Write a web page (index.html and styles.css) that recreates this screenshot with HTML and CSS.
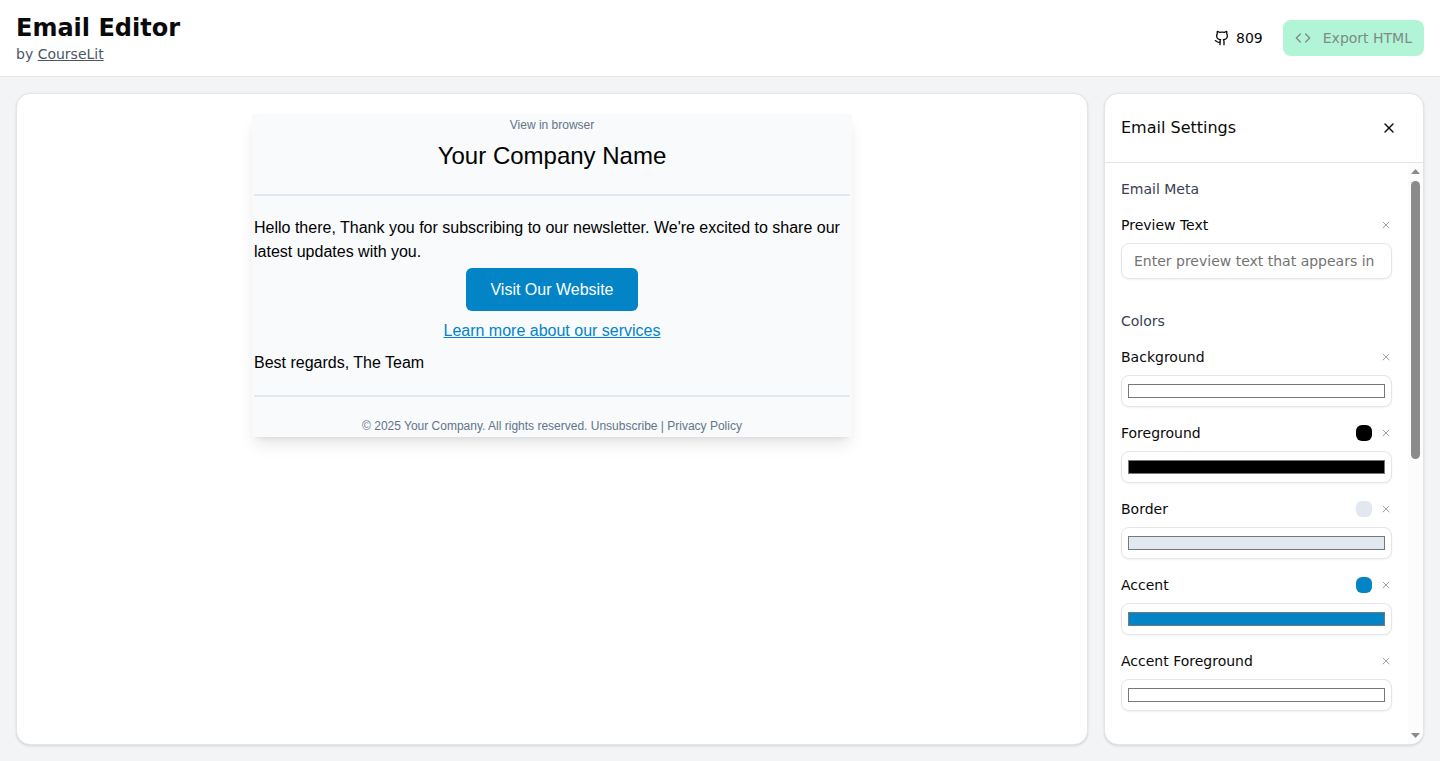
FILE: index.html
```html
<!DOCTYPE html>
<html lang="en">
<head>
    <meta charset="UTF-8">
    <meta name="viewport" content="width=device-width, initial-scale=1.0">
    <title>Email Editor</title>
    <link rel="stylesheet" href="styles.css">
</head>
<body>
    <svg class="sprite" aria-hidden="true">
        <symbol id="icon-x" viewBox="0 0 24 24">
            <path d="M18 6 6 18"/>
            <path d="m6 6 12 12"/>
        </symbol>
    </svg>

    <header class="topbar">
        <div>
            <h1>Email Editor</h1>
            <p class="byline">by <a href="#">CourseLit</a></p>
        </div>
        <div class="actions">
            <a class="stars" href="#">
                <svg class="icon" viewBox="0 0 24 24">
                    <path d="M15 22v-4a4.800 4.800 0 0 0-1-3.500c3 0 6-2 6-5.500.08-1.250-.27-2.480-1-3.500.28-1.150.28-2.350 0-3.500 0 0-1 0-3 1.500-2.640-.5-5.360-.5-8 0C6 2 5 2 5 2c-.3 1.150-.3 2.350 0 3.500A5.403 5.403 0 0 0 4 9c0 3.500 3 5.500 6 5.500-.39.490-.68 1.050-.85 1.650-.17.600-.22 1.230-.15 1.850v4"/>
                    <path d="M9 18c-4.510 2-5-2-7-2"/>
                </svg>
                809
            </a>
            <button class="export" type="button" disabled>
                <svg class="icon" viewBox="0 0 24 24">
                    <path d="m16 18 6-6-6-6"/>
                    <path d="m8 6-6 6 6 6"/>
                </svg>
                Export HTML
            </button>
        </div>
    </header>

    <main class="workspace">
        <section class="card canvas">
            <div class="email">
                <p class="block small">View in browser</p>
                <h2 class="block">Your Company Name</h2>
                <hr>
                <p class="block">Hello there, Thank you for subscribing to our newsletter. We're excited to share our latest updates with you.</p>
                <div class="block center"><a class="cta" href="#">Visit Our Website</a></div>
                <div class="block center"><a class="more" href="#">Learn more about our services</a></div>
                <p class="block">Best regards, The Team</p>
                <hr>
                <p class="block small">© 2025 Your Company. All rights reserved. Unsubscribe | Privacy Policy</p>
            </div>
        </section>

        <aside class="card panel">
            <div class="panel-header">
                <h2>Email Settings</h2>
                <button class="close" type="button" aria-label="Close"><svg class="icon"><use href="#icon-x"/></svg></button>
            </div>
            <div class="panel-main">
                <div class="panel-body">
                    <section class="group">
                        <h3>Email Meta</h3>
                        <div class="field">
                            <div class="field-head">
                                <label for="preview">Preview Text</label>
                                <button class="reset" type="button" aria-label="Reset"><svg class="icon"><use href="#icon-x"/></svg></button>
                            </div>
                            <input class="text-input" id="preview" type="text" placeholder="Enter preview text that appears in">
                        </div>
                    </section>
                    <section class="group">
                        <h3>Colors</h3>
                        <div class="field">
                            <div class="field-head">
                                <label for="background">Background</label>
                                <button class="reset" type="button" aria-label="Reset"><svg class="icon"><use href="#icon-x"/></svg></button>
                            </div>
                            <input class="color-input" id="background" type="color" value="#ffffff">
                        </div>
                        <div class="field">
                            <div class="field-head">
                                <label for="foreground">Foreground</label>
                                <span class="swatch swatch-foreground"></span>
                                <button class="reset" type="button" aria-label="Reset"><svg class="icon"><use href="#icon-x"/></svg></button>
                            </div>
                            <input class="color-input" id="foreground" type="color" value="#000000">
                        </div>
                        <div class="field">
                            <div class="field-head">
                                <label for="border">Border</label>
                                <span class="swatch swatch-border"></span>
                                <button class="reset" type="button" aria-label="Reset"><svg class="icon"><use href="#icon-x"/></svg></button>
                            </div>
                            <input class="color-input" id="border" type="color" value="#e2e8f0">
                        </div>
                        <div class="field">
                            <div class="field-head">
                                <label for="accent">Accent</label>
                                <span class="swatch swatch-accent"></span>
                                <button class="reset" type="button" aria-label="Reset"><svg class="icon"><use href="#icon-x"/></svg></button>
                            </div>
                            <input class="color-input" id="accent" type="color" value="#0284c7">
                        </div>
                        <div class="field">
                            <div class="field-head">
                                <label for="accent-foreground">Accent Foreground</label>
                                <button class="reset" type="button" aria-label="Reset"><svg class="icon"><use href="#icon-x"/></svg></button>
                            </div>
                            <input class="color-input" id="accent-foreground" type="color" value="#ffffff">
                        </div>
                    </section>
                </div>
                <div class="scrollbar" aria-hidden="true">
                    <svg class="arrow" viewBox="0 0 9 5"><path d="M0 5 4.500 0 9 5z"/></svg>
                    <div class="track"><div class="thumb"></div></div>
                    <svg class="arrow" viewBox="0 0 9 5"><path d="M0 0 4.500 5 9 0z"/></svg>
                </div>
            </div>
        </aside>
    </main>
</body>
</html>
```

FILE: styles.css
```css
* {
    box-sizing: border-box;
}
body {
    display: flex;
    flex-direction: column;
    height: 100vh;
    margin: 0;
    background-color: #f3f4f6;
    color: #0a0a0a;
    font-family: "DejaVu Sans", sans-serif;
    font-size: 14px;
    line-height: 20px;
}
h1, h2, h3, p {
    margin: 0;
    font-weight: normal;
}
button, input {
    font: inherit;
    color: inherit;
}
button {
    padding: 0;
    border: 0;
    background: none;
}
.sprite {
    display: none;
}
.icon {
    width: 16px;
    height: 16px;
    fill: none;
    stroke: currentColor;
    stroke-width: 2;
    stroke-linecap: round;
    stroke-linejoin: round;
}

/* top bar */
.topbar {
    display: flex;
    align-items: center;
    justify-content: space-between;
    padding: 12px 16px;
    background-color: #fff;
    border-bottom: 1px solid #e5e5e5;
}
.topbar h1 {
    font-size: 24px;
    line-height: 32px;
    font-weight: bold;
}
.byline {
    color: #4b5563;
}
.byline a {
    color: inherit;
}
.actions {
    display: flex;
    align-items: center;
    gap: 20px;
}
.stars {
    display: flex;
    align-items: center;
    gap: 6px;
    color: inherit;
    text-decoration: none;
}
.export {
    display: flex;
    align-items: center;
    gap: 12px;
    height: 36px;
    padding: 0 12px;
    border-radius: 8px;
    background-color: #b1f5d6;
    color: #7f8a85;
}

/* workspace */
.workspace {
    display: flex;
    flex: 1;
    gap: 16px;
    min-height: 0;
    padding: 16px;
}
.card {
    background-color: #fff;
    border: 1px solid #e5e5e5;
    border-radius: 14px;
    box-shadow: 0 1px 3px rgba(0, 0, 0, 0.1), 0 1px 2px -1px rgba(0, 0, 0, 0.1);
    overflow: hidden;
}
.canvas {
    flex: 1;
    padding: 20px;
}

/* email preview */
.email {
    max-width: 600px;
    margin: 0 auto;
    background-color: #f8fafc;
    box-shadow: 0 10px 15px -3px rgba(0, 0, 0, 0.1), 0 4px 6px -4px rgba(0, 0, 0, 0.1);
    color: #000;
    font-family: "Liberation Sans", Arial, sans-serif;
    font-size: 16px;
    line-height: 24px;
}
.block {
    padding: 2px;
}
.email h2 {
    font-size: 24px;
    line-height: 36px;
    text-align: center;
}
.email hr {
    height: 2px;
    margin: 0 2px;
    border: 0;
    border-top: 18px solid transparent;
    border-bottom: 18px solid transparent;
    box-sizing: content-box;
    background-color: #e2e8f0;
    background-clip: padding-box;
}
.small {
    color: #64748b;
    font-size: 12px;
    line-height: 18px;
    text-align: center;
}
.center {
    display: flex;
    justify-content: center;
}
.cta {
    padding: 12px 24px;
    border-radius: 6px;
    background-color: #0284c7;
    color: #fff;
    line-height: 19px;
    text-decoration: none;
}
.more {
    padding: 4px;
    color: #0284c7;
}

/* settings panel */
.panel {
    display: flex;
    flex-direction: column;
    width: 320px;
}
.panel-header {
    display: flex;
    align-items: center;
    justify-content: space-between;
    padding: 16px;
    border-bottom: 1px solid #e5e5e5;
}
.panel-header h2 {
    font-size: 16px;
    line-height: 24px;
}
.close {
    display: grid;
    place-items: center;
    width: 36px;
    height: 36px;
}
.panel-main {
    display: flex;
    flex: 1;
    min-height: 0;
}
.panel-body {
    flex: 1;
    min-width: 0;
    padding: 16px;
    overflow-y: auto;
    scrollbar-width: none;
}
.scrollbar {
    display: flex;
    flex-direction: column;
    align-items: center;
    gap: 7px;
    width: 15px;
    padding: 6px 0;
    background-color: #fcfcfc;
}
.arrow {
    width: 9px;
    height: 5px;
    fill: #8b8b8b;
}
.track {
    flex: 1;
    width: 9px;
}
.thumb {
    height: 51%;
    border-radius: 5px;
    background-color: #8b8b8b;
}
.group {
    display: grid;
    gap: 16px;
}
.group + .group {
    margin-top: 32px;
}
.group h3 {
    color: #374151;
    font-size: 14px;
}
.field {
    display: grid;
    gap: 8px;
}
.field-head {
    display: flex;
    align-items: center;
    gap: 8px;
}
.field-head label {
    flex: 1;
}
.reset {
    display: flex;
    color: #9ca3af;
}
.reset .icon {
    width: 12px;
    height: 12px;
}
.swatch {
    width: 16px;
    height: 16px;
    border-radius: 6px;
}
.swatch-foreground {
    background-color: #000;
}
.swatch-border {
    background-color: #e2e8f0;
}
.swatch-accent {
    background-color: #0284c7;
}
.text-input, .color-input {
    width: 100%;
    border: 1px solid #e5e5e5;
    border-radius: 8px;
    background-color: #fff;
    box-shadow: 0 1px 2px rgba(0, 0, 0, 0.05);
}
.text-input {
    height: 36px;
    padding: 4px 12px;
}
.text-input::placeholder {
    color: #737373;
}
.color-input {
    height: 32px;
    padding: 4px;
}
```
